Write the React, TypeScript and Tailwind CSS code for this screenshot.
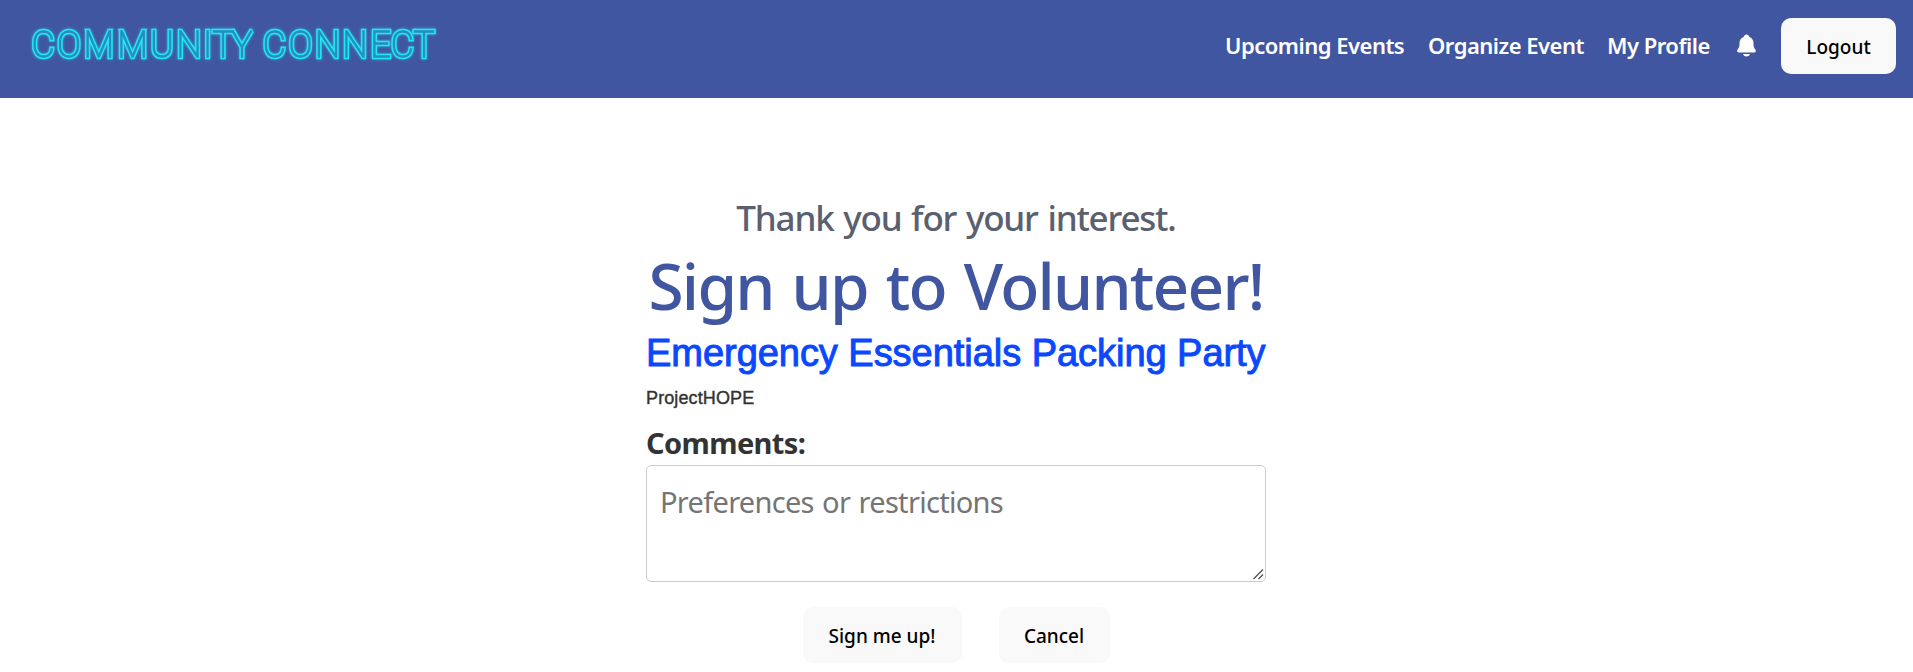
import React from "react";
import { IoNotifications } from "react-icons/io5";

const button =
  "flex h-14 items-center justify-center rounded-[10px] bg-[#f9f9f9] text-[19px] font-medium text-black";

const letterX =
  "45.9 73.4 105.3 141 172.3 201.1 220.9 237.2 257.6 292 319.7 348.4 377.7 404.8 428.2 451";

function Logo() {
  const letters = "COMMUNITYCONNECT";
  const text = "fill-none font-['Roboto'] text-[37.5px] font-thin";
  return (
    <svg
      width="460"
      height="80"
      viewBox="0 0 460 80"
      textAnchor="middle"
      strokeLinejoin="miter"
      strokeMiterlimit={2}
      className="drop-shadow-[0_0_1.5px_#22eef599]"
      role="img"
      aria-label="COMMUNITY CONNECT"
    >
      <g transform="scale(0.94 1)">
        <text x={letterX} y="57.5" className={`${text} stroke-[#20e8f2] stroke-[4.6px]`}>{letters}</text>
        <text x={letterX} y="57.5" className={`${text} stroke-[#2a8ac2] stroke-[1.4px]`}>{letters}</text>
      </g>
    </svg>
  );
}

function Header() {
  return (
    <header className="flex h-[98px] items-start justify-between bg-[#4156a1] pr-[17px]">
      <Logo />
      <nav className="flex items-start pt-[18px] whitespace-nowrap text-white">
        <div className="flex h-[54px] items-center text-[22px] font-semibold tracking-[-0.5px]">
          <a className="w-[203px]">Upcoming Events</a>
          <a className="w-[179px]">Organize Event</a>
          <a className="w-[127px]">My Profile</a>
          <IoNotifications className="mr-[22px] h-[25px] w-[25px]" />
        </div>
        <button className={`${button} w-[115px] pt-0.5`}>Logout</button>
      </nav>
    </header>
  );
}

export default function App() {
  return (
    <div className="h-[672px] overflow-hidden bg-white font-['Noto_Sans',sans-serif] text-[#333]">
      <Header />
      <main className="ml-[646px] flex w-[620px] flex-col whitespace-nowrap pt-[95px]">
        <h2 className="text-center text-[35px] leading-[50px] font-medium tracking-[-1.2px] [word-spacing:1.8px] text-[#5b6070]">Thank you for your interest.</h2>
        <h1 className="pt-px text-center text-[64px] leading-[83px] font-medium tracking-[-1.75px] [word-spacing:3px] text-[#4156a1]">Sign up to Volunteer!</h1>
        <h3 className="pt-px font-['Liberation_Sans',sans-serif] text-[38px] leading-[50px] tracking-[-0.04px] text-[#0a48ff] [-webkit-text-stroke:1px_#0a48ff]">Emergency Essentials Packing Party</h3>
        <p className="font-['Liberation_Sans',sans-serif] text-[18px] leading-[40px] tracking-[0.12px] [-webkit-text-stroke:0.4px_#333]">ProjectHOPE</p>
        <label className="pt-px text-[29px] leading-[48px] font-bold tracking-[-0.6px]">Comments:</label>
        <div className="relative -mt-0.5 h-[117px]">
          <textarea
            className="block h-full w-full resize-none rounded-[5px] border border-[#ccc] bg-white px-[13px] py-[15px] text-[29px] leading-[42px] tracking-[-0.7px] [word-spacing:1.5px] placeholder:text-[#757575]"
            placeholder="Preferences or restrictions"
          />
          <svg className="absolute right-[2px] bottom-[2px] h-3 w-3 stroke-[#555] stroke-[1.4px]" viewBox="0 0 12 12">
            <path d="M1.5 11 L11 1.5 M6.5 11 L11 6.5" />
          </svg>
        </div>
        <div className="mt-[25px] flex justify-center gap-[37px]">
          <button className={`${button} w-[159px] pt-0.5`}>Sign me up!</button>
          <button className={`${button} w-[111px] pt-0.5`}>Cancel</button>
        </div>
      </main>
    </div>
  );
}
